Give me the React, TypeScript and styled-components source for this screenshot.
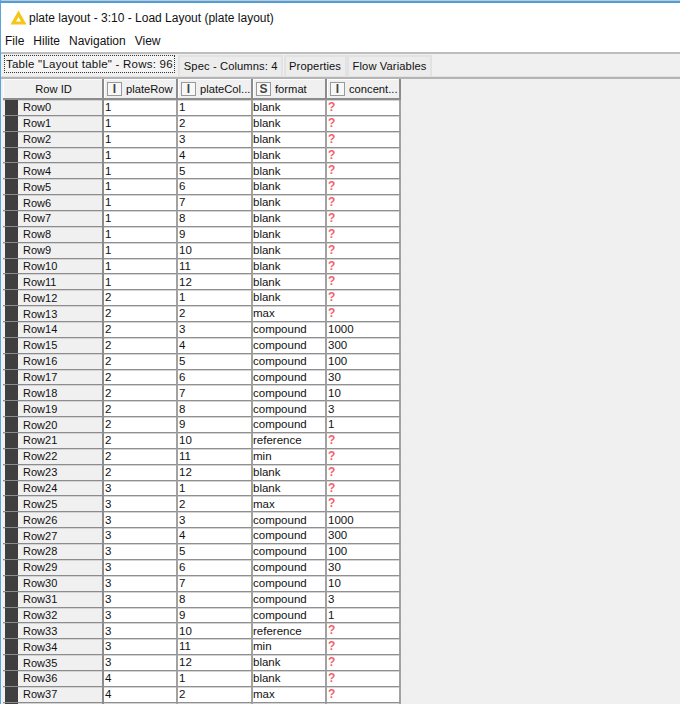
import React from "react";
import styled, { createGlobalStyle } from "styled-components";

const GlobalStyle = createGlobalStyle`
  html, body {
    margin: 0;
    padding: 0;
    background: #f0f0f0;
    overflow: hidden;
  }
`;

const Window = styled.div`
  width: 680px;
  height: 704px;
  overflow: hidden;
  display: flex;
  flex-direction: column;
  background: #f0f0f0;
  font-family: "Liberation Sans", Arial, sans-serif;
  color: #111;
  border-left: 1px solid #5aa5dc;
  box-sizing: border-box;
`;

const TopEdge = styled.div`
  height: 3px;
  flex: none;
  background: linear-gradient(#c8c8c8 0 1px, #4a9fe0 1px 3px);
  margin-left: -1px;
`;

const TitleBar = styled.div`
  height: 27px;
  flex: none;
  display: flex;
  align-items: center;
  gap: 2px;
  padding: 2px 0 0 9px;
  box-sizing: border-box;
  background: #fff;
  font-size: 12px;
`;

const MenuBar = styled.div`
  height: 22px;
  flex: none;
  display: flex;
  align-items: center;
  gap: 9px;
  padding-left: 4px;
  background: #fff;
  font-size: 12px;
  border-bottom: 2px solid #bdbdbd;
`;

const TabStrip = styled.div`
  height: 23px;
  flex: none;
  display: flex;
  align-items: flex-end;
  padding-left: 3px;
  border-bottom: 2px solid #b4b4b4;
  box-shadow: inset 0 -1px 0 #e2e2e2;
`;

const Tab = styled.div<{ $active?: boolean }>`
  height: ${(p) => (p.$active ? 18 : 21)}px;
  box-sizing: border-box;
  display: flex;
  align-items: center;
  padding: 0 ${(p) => (p.$active ? 1 : 5.5)}px;
  margin-right: ${(p) => (p.$active ? 3.5 : 0.5)}px;
  margin-bottom: ${(p) => (p.$active ? 4 : 1)}px;
  font-size: ${(p) => (p.$active ? 11.5 : 11.2)}px;
  letter-spacing: ${(p) => (p.$active ? 0.23 : 0.1)}px;
  white-space: nowrap;
  border: ${(p) => (p.$active ? "1px dotted #333" : "none")};
  background: ${(p) => (p.$active ? "#f4f4f4" : "#ececec")};
  box-shadow: ${(p) => (p.$active ? "none" : "inset 2px 2px 0 #e2e2e2, inset -2px 0 0 #e2e2e2")};
`;

const TableArea = styled.div`
  padding-left: 2px;
  flex: 1;
  overflow: hidden;
`;

const Columns = "101px 74px 75px 74px 74px";

const HeaderRow = styled.div`
  display: grid;
  grid-template-columns: ${Columns};
  height: 21px;
  width: 398px;
`;

const HeaderCell = styled.div`
  display: flex;
  align-items: center;
  gap: 4px;
  padding-left: 3px;
  box-sizing: border-box;
  min-width: 0;
  font-size: 11.2px;
  white-space: nowrap;
  background: #f0f0f0;
  border-right: 2px solid #8c8c8c;
  border-bottom: 2px solid #8c8c8c;
  box-shadow: inset 1px 1px 0 #fff;
`;

const RowIdHeader = styled(HeaderCell)`
  justify-content: center;
  padding: 0 0 0 2px;
`;

const TypeIcon = styled.span`
  width: 15px;
  height: 14px;
  flex: none;
  box-sizing: border-box;
  display: flex;
  align-items: center;
  justify-content: center;
  font-size: 12px;
  font-weight: bold;
  color: #444;
  background: #f7f7f7;
  border: 1px solid #9a9a9a;
`;

const DataRow = styled.div`
  display: grid;
  grid-template-columns: ${Columns};
  height: 15.865px;
  width: 398px;
`;

const Cell = styled.div`
  box-sizing: border-box;
  display: flex;
  align-items: center;
  padding: 1px 0 0 1px;
  font-size: 11.5px;
  line-height: 1;
  background: #fff;
  border-right: 2px solid #a2a2a2;
  border-bottom: 1px solid #909090;
  box-shadow: inset 0 1px 0 #d4d4d4;
`;

const FormatCell = styled(Cell)`
  padding-left: 0;
`;

const RowHeader = styled.div`
  box-sizing: border-box;
  display: flex;
  align-items: center;
  font-size: 11px;
  background: #f0f0f0;
  border-right: 2px solid #8c8c8c;
  border-bottom: 1px solid #8c8c8c;
  box-shadow: inset 0 1px 0 #d4d4d4;
`;

const Marker = styled.span`
  width: 13px;
  height: 100%;
  flex: none;
  margin-right: 5px;
  margin-left: 2px;
  background: #3f3f3f;
`;

const Missing = styled.span`
  color: #f6606a;
  font-size: 12px;
  font-weight: bold;
  margin-top: -2px;
`;

type Row = { plateRow: number; plateCol: number; format: string; conc?: number };

const compound = [1000, 300, 100, 30, 10, 3, 1];

// layout of the plate: blanks on the edge, then max, a dilution series, reference, min
const rowsOf = (plateRow: number): Row[] =>
  Array.from({ length: 12 }, (_, i) => {
    const plateCol = i + 1;
    if (plateRow === 1 || plateCol === 1 || plateCol === 12) {
      return { plateRow, plateCol, format: "blank" };
    }
    if (plateCol === 2) return { plateRow, plateCol, format: "max" };
    if (plateCol === 10) return { plateRow, plateCol, format: "reference" };
    if (plateCol === 11) return { plateRow, plateCol, format: "min" };
    return { plateRow, plateCol, format: "compound", conc: compound[plateCol - 3] };
  });

const rows = [...rowsOf(1), ...rowsOf(2), ...rowsOf(3), ...rowsOf(4)].slice(0, 38);

const PlateIcon = () => (
  <svg width="17" height="15" viewBox="0 0 17 15">
    <path d="M8.5 0.5 L16.5 14.5 H0.5 Z M8.5 7 L6 11.5 H11 Z" fill="#f5c518" fillRule="evenodd" />
  </svg>
);

const App = () => (
  <Window>
    <GlobalStyle />
    <TopEdge />
    <TitleBar>
      <PlateIcon />
      <span>plate layout - 3:10 - Load Layout (plate layout)</span>
    </TitleBar>
    <MenuBar>
      <span>File</span>
      <span>Hilite</span>
      <span>Navigation</span>
      <span>View</span>
    </MenuBar>
    <TabStrip>
      <Tab $active>Table "Layout table" - Rows: 96</Tab>
      <Tab>Spec - Columns: 4</Tab>
      <Tab>Properties</Tab>
      <Tab>Flow Variables</Tab>
    </TabStrip>
    <TableArea>
      <HeaderRow>
        <RowIdHeader>Row ID</RowIdHeader>
        <HeaderCell>
          <TypeIcon>I</TypeIcon>
          plateRow
        </HeaderCell>
        <HeaderCell>
          <TypeIcon>I</TypeIcon>
          plateCol...
        </HeaderCell>
        <HeaderCell>
          <TypeIcon>S</TypeIcon>
          format
        </HeaderCell>
        <HeaderCell>
          <TypeIcon>I</TypeIcon>
          concent...
        </HeaderCell>
      </HeaderRow>
      {rows.map((r, i) => (
        <DataRow key={i}>
          <RowHeader>
            <Marker />
            Row{i}
          </RowHeader>
          <Cell>{r.plateRow}</Cell>
          <Cell>{r.plateCol}</Cell>
          <FormatCell>{r.format}</FormatCell>
          <Cell>{r.conc ?? <Missing>?</Missing>}</Cell>
        </DataRow>
      ))}
      <DataRow>
        <RowHeader>
          <Marker />
        </RowHeader>
        <Cell />
        <Cell />
        <FormatCell />
        <Cell />
      </DataRow>
    </TableArea>
  </Window>
);

export default App;
